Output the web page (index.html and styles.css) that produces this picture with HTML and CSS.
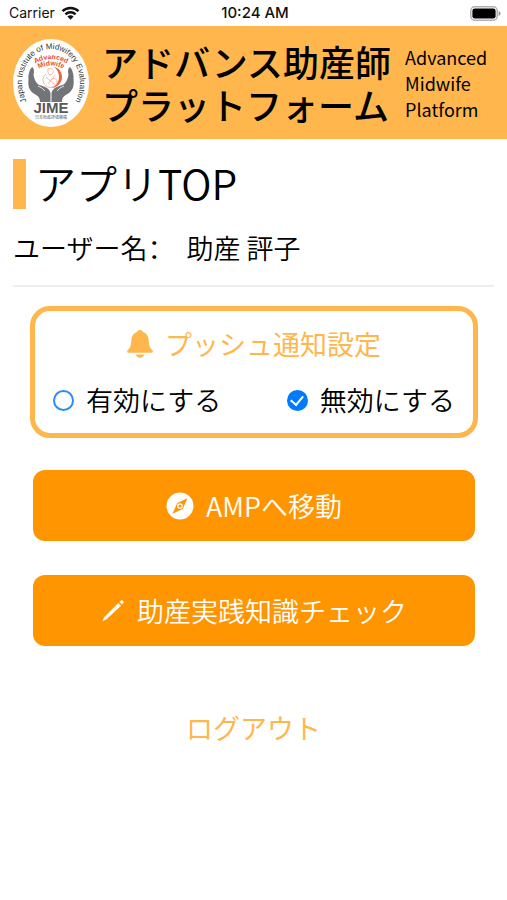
FILE: index.html
```html
<!DOCTYPE html>
<html lang="ja">
<head>
<meta charset="utf-8">
<meta name="viewport" content="width=device-width, initial-scale=1">
<title>アプリTOP</title>
<link rel="stylesheet" href="styles.css">
</head>
<body>
<div class="status">
  <div class="status-left">
    <span>Carrier</span>
    <svg class="wifi" viewBox="0 0 20 15" aria-hidden="true">
      <g fill="none" stroke="#111" stroke-width="2.6">
        <path d="M1.4 5.6a12.2 12.2 0 0 1 17.2 0"/>
        <path d="M4.6 8.9a7.6 7.6 0 0 1 10.8 0"/>
      </g>
      <path fill="#111" d="M10 14.6 6.7 11.2a4.7 4.7 0 0 1 6.6 0z"/>
    </svg>
  </div>
  <time class="clock">10:24 AM</time>
  <svg class="battery" viewBox="0 0 31 15" aria-hidden="true">
    <rect x=".8" y=".8" width="26.4" height="13.4" rx="4" fill="#fff" stroke="#b0b0b0" stroke-width="1.5"/>
    <rect x="2.4" y="2.4" width="23.2" height="10.2" rx="2.4" fill="#000"/>
    <path d="M28.6 5q2 .8 2 2.5t-2 2.5z" fill="#999"/>
  </svg>
</div>

<header class="brand">
  <svg class="logo" viewBox="0 0 76 88" role="img" aria-label="JIME">
    <defs>
      <path id="ring" d="M16 66A29 34 0 1 1 60 66"/>
      <path id="arcOne" d="M20 26Q38 14 56 26"/>
      <path id="arcTwo" d="M22 32Q38 21 54 32"/>
    </defs>
    <ellipse cx="38" cy="44" rx="38" ry="44" fill="#fff"/>
    <text class="logo-ring"><textPath href="#ring" startOffset="50%">Japan Institute of Midwifery Evaluation</textPath></text>
    <text class="logo-red"><textPath href="#arcOne" startOffset="50%">Advanced</textPath></text>
    <text class="logo-red"><textPath href="#arcTwo" startOffset="50%">Midwife</textPath></text>
    <path d="M41 28c5 1 8 5 8 10 0 6-5 11-11 11 5-2 8-6 8-11 0-4-2-8-5-10z" fill="#e8643c"/>
    <g fill="none" stroke="#f3a890" stroke-width=".8">
      <path d="M35 30c4-2 7 2 4 5-2 2-5 0-4-5zM33 35c-4 3-4 9 0 12 4 3 11 1 11-4s-5-4-7-1M33 38l9 8M42 36l-7 9"/>
    </g>
    <g fill="#737477">
      <path d="M19 28c2 1 2.500 4 1.500 8 1 4 2 8 6 10 4 1 10 3 11 8v9H27c0-6-4-7-7-9-5-4-5-9-4.500-14-.5-5 1.500-10 3.500-12z"/>
      <path d="M57 28c-2 1-2.500 4-1.500 8-1 4-2 8-6 10-4 1-10 3-11 8v9H49c0-6 4-7 7-9 5-4 5-9 4.500-14 .5-5-1.500-10-3.500-12z"/>
    </g>
    <path d="M25 47q5 2 7 5M51 47q-5 2-7 5" fill="none" stroke="#fff" stroke-width=".8"/>
    <text class="logo-name" x="38" y="74">JIME</text>
    <text class="logo-sub" x="38" y="80">日本助産評価機構</text>
  </svg>
  <div class="brand-ja">アドバンス助産師<br>プラットフォーム</div>
  <div class="brand-en">Advanced<br>Midwife<br>Platform</div>
</header>

<main class="content">
  <h1 class="title">アプリTOP</h1>
  <div class="user"><span>ユーザー名<span class="colon" lang="zh-Hans">：</span></span><span>助産 評子</span></div>

  <div class="panel">
    <form class="push" aria-labelledby="push-title">
      <h2 class="push-title" id="push-title">
        <svg class="bell" viewBox="0 0 26 28" aria-hidden="true">
          <path fill="currentColor" d="M13 0c1.700 0 2.700.8 3 2 3.700 1.200 5.500 4.300 5.700 8.500.3 5.500 1.300 7.500 3.500 9.500 1.300 1.300.6 2.700-1 2.700H1.800C.2 22.700-.5 21.300.8 20c2.200-2 3.200-4 3.500-9.500C4.500 6.300 6.300 3.200 10 2c.3-1.200 1.300-2 3-2zM8.800 24.600h8.400c-.4 2-2.200 3.200-4.200 3.200s-3.800-1.200-4.200-3.200z"/>
        </svg>
        プッシュ通知設定
      </h2>
      <div class="options">
        <label class="option"><input type="radio" name="push" value="on">有効にする</label>
        <label class="option"><input type="radio" name="push" value="off" checked>無効にする</label>
      </div>
    </form>

    <button class="action" type="button">
      <svg class="compass" viewBox="0 0 28 28" aria-hidden="true">
        <path fill="#fff" fill-rule="evenodd" d="M14 .5a13.500 13.500 0 1 1 0 27 13.500 13.500 0 0 1 0-27zM21.500 6.300 11.300 11 6.500 21.700l10.200-4.800z"/>
        <circle cx="14" cy="14" r="2.200" fill="none" stroke="#fff" stroke-width="1.300"/>
      </svg>
      AMPへ移動
    </button>
    <button class="action" type="button">
      <svg class="pencil" viewBox="0 0 24 24" aria-hidden="true">
        <path fill="#fff" d="M17.300 4 20 6.700 5.200 20.400 1.500 22l1.600-3.700zM18.400 2.900l1.500-1.400q1.100-.7 2.100.3t.3 2.100l-1.300 1.700z"/>
      </svg>
      助産実践知識チェック
    </button>
  </div>

  <a class="logout" href="#">ログアウト</a>
</main>
</body>
</html>
```

FILE: styles.css
```css
* {
  box-sizing: border-box;
}

body {
  margin: 0;
  background: #fff;
  color: #000;
  font-family: "Noto Sans CJK JP", sans-serif;
  font-size: 27px;
  font-weight: 350;
  line-height: 40px;
}

.status {
  display: grid;
  grid-template-columns: 1fr auto 1fr;
  align-items: center;
  height: 26px;
  padding: 0 6px 0 9px;
  font: 400 14px/26px Inter, sans-serif;
  color: #111;
}

.status-left {
  display: flex;
  align-items: center;
  gap: 6px;
}

.wifi {
  width: 19px;
  height: 14px;
}

.clock {
  font-size: 15px;
  font-weight: 500;
}

.battery {
  justify-self: end;
  width: 31px;
  height: 15px;
}

.brand {
  display: flex;
  align-items: center;
  padding: 13px 13px 12px;
  background: #ffb74d;
}

.logo {
  flex: none;
  width: 76px;
  height: 88px;
}

.logo text {
  text-anchor: middle;
  font-family: "Liberation Sans", sans-serif;
}

.logo .logo-ring {
  font-size: 8px;
  font-weight: 400;
  fill: #333;
}

.logo .logo-red {
  font-size: 7px;
  font-weight: 700;
  fill: #e8502d;
}

.logo .logo-name {
  font-size: 15px;
  font-weight: 700;
  fill: #58595b;
}

.logo .logo-sub {
  font-family: "Noto Sans CJK JP", sans-serif;
  font-size: 4px;
  fill: #555;
}

.brand-ja {
  margin-left: 13px;
  font-size: 36px;
  font-weight: 500;
  line-height: 43px;
  white-space: nowrap;
}

.brand-en {
  margin-left: 14px;
  font-size: 18px;
  font-weight: 400;
  line-height: 26px;
}

.content {
  display: flex;
  flex-direction: column;
  padding: 20px 13px;
}

.title {
  margin: 0;
  padding: 0 0 4px 9px;
  border-left: 13px solid #ffb74d;
  font-size: 41px;
  font-weight: 350;
  line-height: 46px;
}

.user {
  display: flex;
  gap: 12px;
  padding: 19px 0 17px;
  border-bottom: 2px solid #eee;
}

.colon {
  font-family: "Noto Sans CJK SC", sans-serif;
}

.panel {
  display: flex;
  flex-direction: column;
  gap: 34px;
  padding: 19px 19px 0 20px;
}

.push {
  margin: 0 -3px -2px;
  padding: 13px 18px;
  border: 5px solid #ffb74d;
  border-radius: 20px;
}

.push-title {
  display: flex;
  align-items: center;
  justify-content: center;
  gap: 12px;
  margin: 0 0 16px;
  color: #ffb74d;
  font-size: 27px;
  font-weight: 400;
  line-height: 40px;
}

.bell {
  width: 26px;
  height: 28px;
}

.options {
  display: flex;
  justify-content: space-between;
}

.option {
  display: flex;
  align-items: center;
  gap: 12px;
}

.option input {
  appearance: none;
  display: grid;
  place-items: center;
  width: 21px;
  height: 21px;
  margin: 0;
  border: 2px solid #2b8cff;
  border-radius: 50%;
}

.option input:checked {
  border-color: #007aff;
  background: #007aff;
}

.option input:checked::before {
  content: "";
  width: 6px;
  height: 10px;
  margin-bottom: 2px;
  border: solid #fff;
  border-width: 0 2px 2px 0;
  transform: rotate(40deg);
}

.action {
  display: flex;
  align-items: center;
  justify-content: center;
  gap: 12px;
  min-height: 71px;
  padding: 0;
  border: 0;
  border-radius: 12px;
  background: #ff9500;
  color: #fff;
  font: inherit;
}

.compass {
  width: 28px;
  height: 28px;
}

.pencil {
  width: 24px;
  height: 24px;
}

.logout {
  align-self: center;
  margin-top: 62px;
  color: #ffb74d;
  font-weight: 400;
  text-decoration: none;
}
```
